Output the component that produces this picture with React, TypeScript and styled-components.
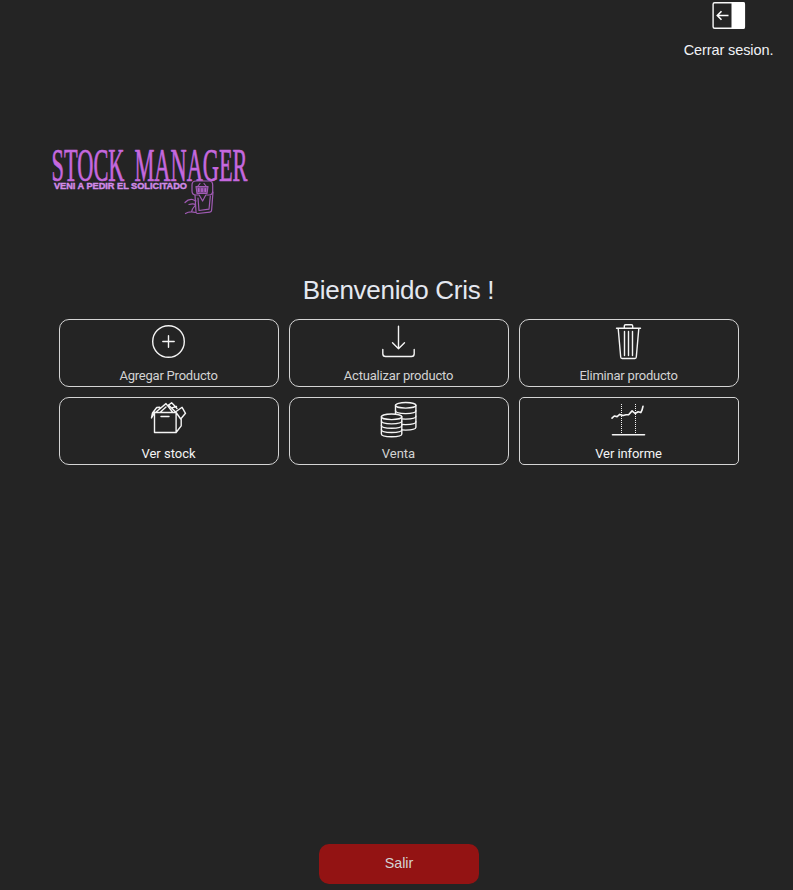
import React from 'react';
import styled, { createGlobalStyle } from 'styled-components';

const GlobalStyle = createGlobalStyle`
  * { box-sizing: border-box; }
  body { margin: 0; background: #242424; }
`;

const Page = styled.main`
  height: 890px;
  display: flex;
  flex-direction: column;
  background: #242424;
  color: #e4e8f0;
  font-family: 'Liberation Sans', Arial, sans-serif;
  overflow: hidden;
`;

const Logout = styled.button`
  align-self: flex-end;
  width: 91px;
  height: 60px;
  margin-right: 19px;
  padding: 0;
  border: 0;
  background: none;
  color: #f0f2f6;
  display: flex;
  flex-direction: column;
  align-items: center;
  font: 14.5px/18px 'Liberation Sans', Arial, sans-serif;
  letter-spacing: -0.1px;
  white-space: nowrap;
`;

const LogoutIcon = styled.svg`
  width: 36px;
  height: 32px;
  margin-bottom: 9px;
  flex: none;
`;

const Logo = styled.svg`
  width: 300px;
  height: 80px;
  margin: 80px 0 0 45px;
  flex: none;
`;

const Title = styled.h1`
  margin: 55px 0 0;
  padding-left: 4px;
  height: 44px;
  font-size: 26px;
  line-height: 30px;
  font-weight: 400;
  letter-spacing: -0.3px;
  text-align: center;
`;

const Menu = styled.nav`
  display: grid;
  grid-template-columns: repeat(3, 220px);
  grid-auto-rows: 68px;
  gap: 10px;
  margin-left: 59px;
`;

const Card = styled.button<{ $radius?: number; $bright?: boolean; $tracking?: number }>`
  display: flex;
  flex-direction: column;
  align-items: center;
  padding: 3px 0 0;
  border: 1px solid #d4d4d4;
  border-radius: ${(p) => p.$radius ?? 10}px;
  background: transparent;
  color: ${(p) => (p.$bright ? '#f4f4f4' : '#d3d3d3')};
  font: 13px/16px Roboto, sans-serif;
  letter-spacing: ${(p) => p.$tracking ?? 0}px;
`;

const CardLabel = styled.span`
  padding-right: 1px;
`;

const CardIcon = styled.svg`
  width: 38px;
  height: 37px;
  margin-bottom: 8px;
  flex: none;
  fill: none;
  stroke: #f4f4f4;
  stroke-width: 1.4;
  stroke-linecap: round;
  stroke-linejoin: round;
`;

const Exit = styled.button`
  width: 160px;
  height: 40px;
  margin: auto 0 6px 319px;
  padding: 0 0 2px;
  border: 0;
  border-radius: 10px;
  background: #931313;
  color: #d3d3d3;
  font: 14.3px 'Liberation Sans', Arial, sans-serif;
`;

const coinStack = (x: number, top: number, bottom: number, rows: number[]) => (
  <>
    <ellipse cx={x + 10.2} cy={top} rx="10.2" ry="2.8" />
    <path d={`M${x} ${top}V${bottom}c0 3.7 20.4 3.7 20.4 0V${top}`} />
    {rows.map((y) => (
      <path key={y} d={`M${x} ${y}c0 3.7 20.4 3.7 20.4 0`} />
    ))}
  </>
);

type Item = { label: string; icon: React.ReactNode; radius?: number; bright?: boolean; tracking?: number };

const items: Item[] = [
  {
    label: 'Agregar Producto',
    tracking: -0.22,
    icon: (
      <>
        <circle cx="18.5" cy="18.5" r="15.8" />
        <path d="M12.8 18.5h11.4M18.5 12.8v11.4" />
      </>
    ),
  },
  {
    label: 'Actualizar producto',
    tracking: -0.2,
    icon: <path d="M18.5 3.3v22.5M12.5 19.8l6 6 6-6M2.8 26.5v4.2q0 2.8 2.8 2.8h25.8q2.8 0 2.8-2.8v-4.2" />,
  },
  {
    label: 'Eliminar producto',
    tracking: -0.22,
    icon: (
      <path d="M6.5 5.3h24M14.3 5V3q0-1.2 1.2-1.2h6q1.2 0 1.2 1.2v2M8.2 5.5l2.5 28.5q.1 1.5 1.4 1.5h12.8q1.3 0 1.4-1.5l2.5-28.5M14.5 8.5v24M18.5 8.5v24M22.5 8.5v24" />
    ),
  },
  {
    label: 'Ver stock',
    bright: true,
    icon: (
      <path d="M4.5 11.5h21.6v20H4.5zM11 15.5h8M4.5 11.5l-3 5.5 1-5 4.2-5.5 3-.3M6 11l10-8.4L22.5 11M10.5 11l5.5-5M17.8 4.7l3.8-3 2.7 2.8 2.7 3M18.5 4l7.6 7.5M22.5 6.7l4-1.2M26.1 10.5l6-4.2 3.4 6-4.8 5.7-4.6-6.5M31.2 18v6.8l-5.1 6.7" />
    ),
  },
  {
    label: 'Venta',
    icon: (
      <>
        {coinStack(15.5, 4.3, 26.3, [9.8, 15.3, 20.8])}
        <rect x="1" y="13" width="20.8" height="23" fill="#242424" stroke="none" />
        {coinStack(1.4, 15.8, 33, [20.1, 24.4, 28.7])}
      </>
    ),
  },
  {
    label: 'Ver informe',
    radius: 5,
    bright: true,
    tracking: -0.08,
    icon: (
      <>
        <path
          d="M2 17.2l2.3-2.2 2.8.6 2.6-2.2 3.3 1.2 3-.8h2.6l3.5-3.9 3 2.6 3-1.7 2.7.8 1.2-2.4 1-4"
          strokeWidth="1.6"
        />
        <path d="M11.5 3v30M25.5 3v30" strokeDasharray="1 1" strokeWidth="1" strokeLinecap="butt" />
        <path d="M2.5 33.7h32" strokeWidth="1.6" />
      </>
    ),
  },
];

export default function App() {
  return (
    <>
      <GlobalStyle />
      <Page>
        <Logout>
          <LogoutIcon viewBox="0 0 36 32">
            <rect x="2.1" y="2.7" width="31.3" height="25.6" rx="1.5" fill="none" stroke="#f8f8f8" strokeWidth="1.4" />
            <path d="M20.5 2h11.5q2 0 2 2v23q0 2-2 2H20.5z" fill="#fff" />
            <path d="M17.5 15.5H6.5M10.5 11.3l-4.2 4.2 4.2 4.2" fill="none" stroke="#fff" strokeWidth="1.6" />
          </LogoutIcon>
          Cerrar sesion.
        </Logout>
        <Logo viewBox="0 0 300 80" fill="#c568df">
          <g fontFamily="'Liberation Serif', serif" fontSize="46" stroke="#c568df" strokeWidth=".7" strokeLinejoin="round">
            <text x="6.5" y="41" textLength="73" lengthAdjust="spacingAndGlyphs">STOCK</text>
            <text x="89.5" y="41" textLength="113" lengthAdjust="spacingAndGlyphs">MANAGER</text>
          </g>
          <text
            x="9"
            y="49.2"
            textLength="133"
            lengthAdjust="spacingAndGlyphs"
            fontFamily="'Liberation Sans', sans-serif"
            fontWeight="700"
            fontSize="8.4"
            fill="#d18be8"
            stroke="#d18be8"
            strokeWidth=".4"
          >
            VENI A PEDIR EL SOLICITADO
          </text>
          <g fill="none" stroke="#a05bb4" strokeWidth="1.2" strokeLinecap="round" strokeLinejoin="round">
            <path d="M150 55l1 17q.2 1.6 1.8 1.5l12-1.4q1.7-.2 1.8-1.8L168 52M153 58l1 12.5 10-1.3 1.3-13" />
            <path
              d="M151 41h13q3.7 0 3.7 4v6q0 4-3.7 4h-3.2l-3.2 6-3.4-6H151q-4 0-4-4v-6q0-4 4-4z"
              fill="#242424"
            />
            <path d="M151 46.5h12l-1 7h-10zM153 46l2-2.5M161 46l-2-2.5" fill="#744683" />
            <path d="M153.8 48.5v3M157 48.5v3M160.2 48.5v3" stroke="#c568df" />
            <path d="M140 62.5q3.5-3.8 7.5-3l3.5 1.5M144 64.5q5-1.5 6.5.5l-3 4-1 3M140.5 73.5q4-2.5 10-1" />
          </g>
        </Logo>
        <Title>Bienvenido Cris !</Title>
        <Menu>
          {items.map((item) => (
            <Card key={item.label} $radius={item.radius} $bright={item.bright} $tracking={item.tracking}>
              <CardIcon viewBox="0 0 38 37">{item.icon}</CardIcon>
              <CardLabel>{item.label}</CardLabel>
            </Card>
          ))}
        </Menu>
        <Exit>Salir</Exit>
      </Page>
    </>
  );
}
